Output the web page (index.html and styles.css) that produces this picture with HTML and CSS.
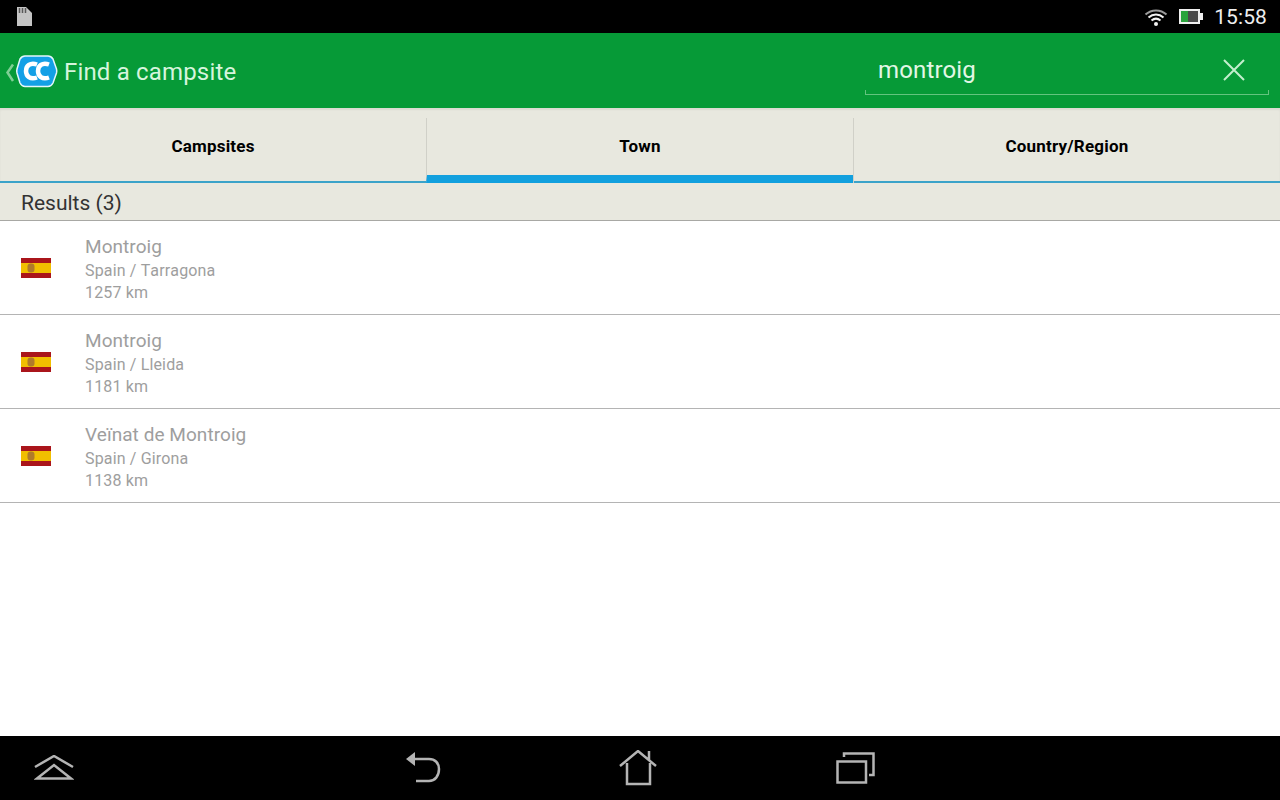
FILE: index.html
```html
<!DOCTYPE html>
<html>
<head>
<title>Find a campsite</title>
<link rel="stylesheet" href="styles.css">
</head>
<body>

<div class="statusbar">
  <svg class="sdcard" width="16" height="19" viewBox="0 0 16 19">
    <path d="M1 0H10L16 6V19H1Z" fill="#c4c4c4"/>
    <path d="M3.500 1V6M6.500 1V6M9.500 1V6" stroke="#5a5a5a" stroke-width="1.500"/>
  </svg>
  <div class="status-right">
    <svg width="24" height="20" viewBox="0 0 24 20" fill="none" stroke="#f2f2f2" stroke-width="2">
      <path d="M1.500 7.500C7.500 2 16.500 2 22.500 7.500" stroke="#9a9a9a"/>
      <path d="M4.500 10.500C9 6.500 15 6.500 19.500 10.500"/>
      <path d="M7.500 13.500C10.500 11 13.500 11 16.500 13.500"/>
      <circle cx="12" cy="17" r="2" fill="#f2f2f2" stroke="none"/>
    </svg>
    <svg class="battery" width="24" height="15" viewBox="0 0 24 15">
      <path d="M0 0H21V4H24V11H21V15H0Z" fill="#efefef"/>
      <rect x="2" y="2" width="17" height="11" fill="#4a4a4a"/>
      <rect x="2" y="2" width="7" height="11" fill="#2aa33c"/>
    </svg>
    <span class="clock">15:58</span>
  </div>
</div>

<div class="appbar">
  <svg class="logo" width="54" height="34" viewBox="0 0 54 34">
    <path d="M9 9.500L3.500 17.500L9 26" fill="none" stroke="#7fcf95" stroke-width="2.500"/>
    <path d="M21 1H44Q47 1 49 4L52.500 14Q53 16 52.500 18L49 28Q47 31.500 44 31.500H21Q18 31.500 16 28L13 18Q12.500 16 13 14L16 4Q18 1 21 1Z" fill="#13a0e6" stroke="#e4f6fb" stroke-width="1.500"/>
    <path d="M33 9.500C26 7 22 11 22 16C22 21 26 25 33 22.500" fill="none" stroke="#fff" stroke-width="4.500"/>
    <path d="M45 9.500C38 7 34 11 34 16C34 21 38 25 45 22.500" fill="none" stroke="#fff" stroke-width="4.500"/>
  </svg>
  <span class="title">Find a campsite</span>
  <div class="search">
    <span class="query">montroig</span>
    <svg width="24" height="24" viewBox="0 0 24 24" stroke="#c4efce" stroke-width="2">
      <path d="M2 2L22 22M22 2L2 22"/>
    </svg>
  </div>
</div>

<div class="tabs">
  <div class="tab">Campsites</div>
  <div class="tab active">Town</div>
  <div class="tab">Country/Region</div>
</div>

<div class="results-head">Results (3)</div>

<div class="results">
  <div class="row">
    <svg class="flag" width="30" height="20" viewBox="0 0 30 20"><use href="#es"/></svg>
    <div class="place">
      <div class="name">Montroig</div>
      <div class="sub">Spain / Tarragona</div>
      <div class="sub">1257 km</div>
    </div>
  </div>
  <div class="row">
    <svg class="flag" width="30" height="20" viewBox="0 0 30 20"><use href="#es"/></svg>
    <div class="place">
      <div class="name">Montroig</div>
      <div class="sub">Spain / Lleida</div>
      <div class="sub">1181 km</div>
    </div>
  </div>
  <div class="row">
    <svg class="flag" width="30" height="20" viewBox="0 0 30 20"><use href="#es"/></svg>
    <div class="place">
      <div class="name">Veïnat de Montroig</div>
      <div class="sub">Spain / Girona</div>
      <div class="sub">1138 km</div>
    </div>
  </div>
</div>

<div class="navbar">
  <svg class="nav-up" width="40" height="26" viewBox="0 0 40 26" fill="none" stroke="#b4b4b4" stroke-width="2.500">
    <path d="M1 12L20 1L39 12"/>
    <path d="M3 23.500L20 10L37 23.500Z"/>
  </svg>
  <svg class="nav-back" width="36" height="34" viewBox="0 0 36 34" fill="none" stroke="#b4b4b4" stroke-width="2.500">
    <path d="M1 8L10 1V15Z" fill="#b4b4b4" stroke="none"/>
    <path d="M9 8H24C30 8 34 12 34 18C34 25 30 30 24 30H11"/>
  </svg>
  <svg class="nav-home" width="38" height="36" viewBox="0 0 38 36" fill="none" stroke="#b4b4b4" stroke-width="2.500">
    <path d="M1 16L19 1L37 16M30 1V10"/>
    <path d="M8 13V34H31V13"/>
  </svg>
  <svg class="nav-recent" width="40" height="32" viewBox="0 0 40 32" fill="none" stroke="#b4b4b4" stroke-width="2.500">
    <rect x="1.500" y="9.500" width="28.500" height="21"/>
    <path d="M8 5V1.500H37.500V23H33"/>
  </svg>
</div>

<svg class="defs" width="0" height="0">
  <defs>
    <g id="es">
      <rect width="30" height="20" fill="#aa151b"/>
      <rect y="5" width="30" height="10" fill="#f1bf00"/>
      <rect x="6.500" y="5.500" width="7" height="9" rx="3" fill="#b07a2a"/>
    </g>
  </defs>
</svg>

</body>
</html>
```

FILE: styles.css
```css
html, body   { margin: 0; padding: 0; }
body         { width: 1280px; height: 800px; display: flex; flex-direction: column; overflow: hidden; background: #fff; font-family: Roboto, sans-serif; }

.statusbar   { height: 33px; flex: none; background: #000; display: flex; align-items: center; justify-content: space-between; padding: 0 13px 0 16px; }
.sdcard      { margin-bottom: 1px; }
.status-right { display: flex; align-items: center; }
.battery     { margin-left: 11px; }
.clock       { margin-left: 11px; font-size: 21px; color: #eee; letter-spacing: 0.1px; }

.appbar      { height: 75px; flex: none; background: #069a37; display: flex; align-items: center; padding: 0 11px 0 4px; }
.logo        { flex: none; margin-top: 2px; }
.title       { margin-left: 6px; margin-top: 2px; font-size: 24px; color: #d6f5dd; letter-spacing: 0.17px; }
.search      { position: relative; margin-left: auto; width: 404px; height: 49px; box-sizing: border-box; border-bottom: 1px solid #63c47f; padding: 0 23px 0 13px; display: flex; align-items: center; justify-content: space-between; }
.search::before, .search::after { content: ""; position: absolute; bottom: 0; width: 1px; height: 4px; background: #63c47f; }
.search::before { left: 0; }
.search::after  { right: 0; }
.query       { font-size: 24px; color: #e2f7e6; letter-spacing: 0.15px; }

.tabs        { height: 75px; flex: none; box-sizing: border-box; background: #e8e8df; border-bottom: 2px solid #3ba3c9; box-shadow: inset 0 2px 2px rgba(0,0,0,0.06); display: flex; align-items: stretch; padding-top: 10px; }
.tab         { flex: 1; display: flex; align-items: center; justify-content: center; padding-bottom: 10px; margin-bottom: -2px; font-size: 17px; font-weight: bold; color: #000; letter-spacing: 0.2px; border-left: 1px solid #d0d0c8; }
.tab:first-child { border-left: none; }
.tab.active  { border-bottom: 8px solid #12a0de; padding-bottom: 2px; }

.results-head { height: 38px; flex: none; background: #e8e8df; box-sizing: border-box; border-bottom: 1px solid #a8a8a4; padding-left: 21px; line-height: 41px; font-size: 21px; color: #333; }

.results     { flex: 1; }
.row         { height: 94px; box-sizing: border-box; border-bottom: 1px solid #b4b4b4; display: flex; align-items: center; padding-left: 21px; }
.flag        { flex: none; margin-right: 34px; }
.place       { margin-top: 2px; }
.name        { font-size: 19px; line-height: 26px; color: #9e9e9e; letter-spacing: 0.06px; }
.sub         { font-size: 16px; line-height: 22px; color: #9e9e9e; letter-spacing: 0.15px; font-kerning: none; }

.navbar      { height: 64px; flex: none; background: #000; display: flex; align-items: center; }
.nav-up      { margin-left: 34px; }
.nav-back    { margin-left: 331px; }
.nav-home    { margin-left: 178px; }
.nav-recent  { margin-left: 179px; }

.defs        { position: absolute; }
```
